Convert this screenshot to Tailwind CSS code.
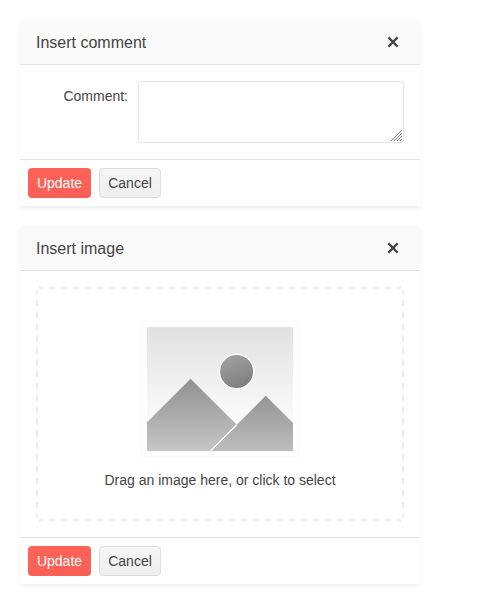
<!DOCTYPE html>
<html lang="en">
<head>
<meta charset="utf-8">
<title>Dialogs</title>
<script src="https://cdn.jsdelivr.net/npm/@tailwindcss/browser@4"></script>
</head>
<body class="bg-white p-5 font-['Liberation_Sans',Arial,sans-serif] text-sm leading-5 text-[#444]">
<div class="flex w-[400px] flex-col gap-5">
  <section class="rounded-t-[3px] bg-white shadow-[0_3px_4px_rgba(0,0,0,0.06)]">
    <header class="flex h-[45px] items-center justify-between rounded-t-[3px] border-b border-[#e5e5e5] bg-[#fafafa] px-4">
      <h2 class="pt-0.5 text-base leading-6">Insert comment</h2>
      <button class="flex w-[22px] justify-center" aria-label="Close">
        <svg width="12" height="12" viewBox="0 0 12 12"><path d="M1.4 1.4L10.6 10.6M10.6 1.4L1.4 10.6" stroke="#444" stroke-width="2.2" fill="none"/></svg>
      </button>
    </header>
    <div class="flex p-4">
      <label for="comment" class="w-[102px] pt-[5px] pr-[10px] text-right">Comment:</label>
      <div class="relative">
        <textarea id="comment" class="block h-[62px] w-[266px] resize-none rounded border border-[#e5e5e5] bg-white"></textarea>
        <svg class="pointer-events-none absolute right-[2px] bottom-[2px]" width="11" height="11" viewBox="0 0 11 11"><path d="M0 11L11 0M3 11L11 3M6 11L11 6M9 11L11 9" stroke="#808080" stroke-width="1" fill="none"/></svg>
      </div>
    </div>
    <footer class="flex gap-2 border-t border-[#e5e5e5] p-2">
      <button class="h-[30px] w-[63px] rounded bg-linear-to-b from-[#ff6358] to-[#fa5f55] text-white">Update</button>
      <button class="h-[30px] w-[62px] rounded border border-[#dcdcdc] bg-linear-to-b from-[#f5f5f5] to-[#efefef]">Cancel</button>
    </footer>
  </section>

  <section class="rounded-t-[3px] bg-white shadow-[0_3px_4px_rgba(0,0,0,0.06)]">
    <header class="flex h-[45px] items-center justify-between rounded-t-[3px] border-b border-[#e5e5e5] bg-[#fafafa] px-4">
      <h2 class="pt-0.5 text-base leading-6">Insert image</h2>
      <button class="flex w-[22px] justify-center" aria-label="Close">
        <svg width="12" height="12" viewBox="0 0 12 12"><path d="M1.4 1.4L10.6 10.6M10.6 1.4L1.4 10.6" stroke="#444" stroke-width="2.2" fill="none"/></svg>
      </button>
    </header>
    <div class="p-4">
      <div class="relative flex h-[234px] flex-col items-center pt-[33px]">
        <!-- dashed outline of the drop zone -->
        <svg class="pointer-events-none absolute inset-0" width="368" height="234" viewBox="0 0 368 234" fill="none" stroke="#ebebeb" stroke-width="2">
          <path d="M3 1H365M3 233H365" stroke-dasharray="6 6" stroke-dashoffset="2"/>
          <path d="M1 3V231M367 3V231" stroke-dasharray="6 5.89" stroke-dashoffset="2"/>
        </svg>
        <svg class="block" width="160" height="138" viewBox="0 0 160 138">
          <defs>
            <linearGradient id="sky" x1="0" y1="0" x2="0" y2="1"><stop offset="0" stop-color="#e1e1e1"/><stop offset=".72" stop-color="#fafafa"/><stop offset="1" stop-color="#fff"/></linearGradient>
            <linearGradient id="hill" x1="0" y1="0" x2="0" y2="1"><stop offset="0" stop-color="#909090"/><stop offset="1" stop-color="#c6c6c6"/></linearGradient>
            <linearGradient id="hill2" x1="0" y1="0" x2="0" y2="1"><stop offset="0" stop-color="#959595"/><stop offset="1" stop-color="#bdbdbd"/></linearGradient>
            <linearGradient id="sun" x1=".2" y1="0" x2=".6" y2="1"><stop offset="0" stop-color="#a2a2a2"/><stop offset="1" stop-color="#7e7e7e"/></linearGradient>
            <clipPath id="photo"><rect x="7" y="7" width="146" height="124" rx="1"/></clipPath>
          </defs>
          <rect x="0.5" y="0.5" width="159" height="137" rx="4" fill="none" stroke="#fdfdfd"/>
          <rect x="1.5" y="1.5" width="157" height="135" rx="3" fill="#fff" stroke="#f7f7f7"/>
          <g clip-path="url(#photo)">
            <rect x="7" y="7" width="146" height="124" fill="url(#sky)"/>
            <path d="M7 102.3L50.6 58.7L96.5 104.6L70 131H7Z" fill="url(#hill)"/>
            <path d="M70.5 131L125.7 75.8L153 103V131Z" fill="url(#hill2)"/>
            <path d="M70 131.5L96.5 105" stroke="#fff" stroke-width="1.2"/>
            <circle cx="96.6" cy="51.5" r="17.1" fill="url(#sun)" stroke="#fff" stroke-width="1.2"/>
          </g>
        </svg>
        <p class="mt-[12px]">Drag an image here, or click to select</p>
      </div>
    </div>
    <footer class="flex gap-2 border-t border-[#e5e5e5] p-2">
      <button class="h-[30px] w-[63px] rounded bg-linear-to-b from-[#ff6358] to-[#fa5f55] text-white">Update</button>
      <button class="h-[30px] w-[62px] rounded border border-[#dcdcdc] bg-linear-to-b from-[#f5f5f5] to-[#efefef]">Cancel</button>
    </footer>
  </section>
</div>
</body>
</html>
